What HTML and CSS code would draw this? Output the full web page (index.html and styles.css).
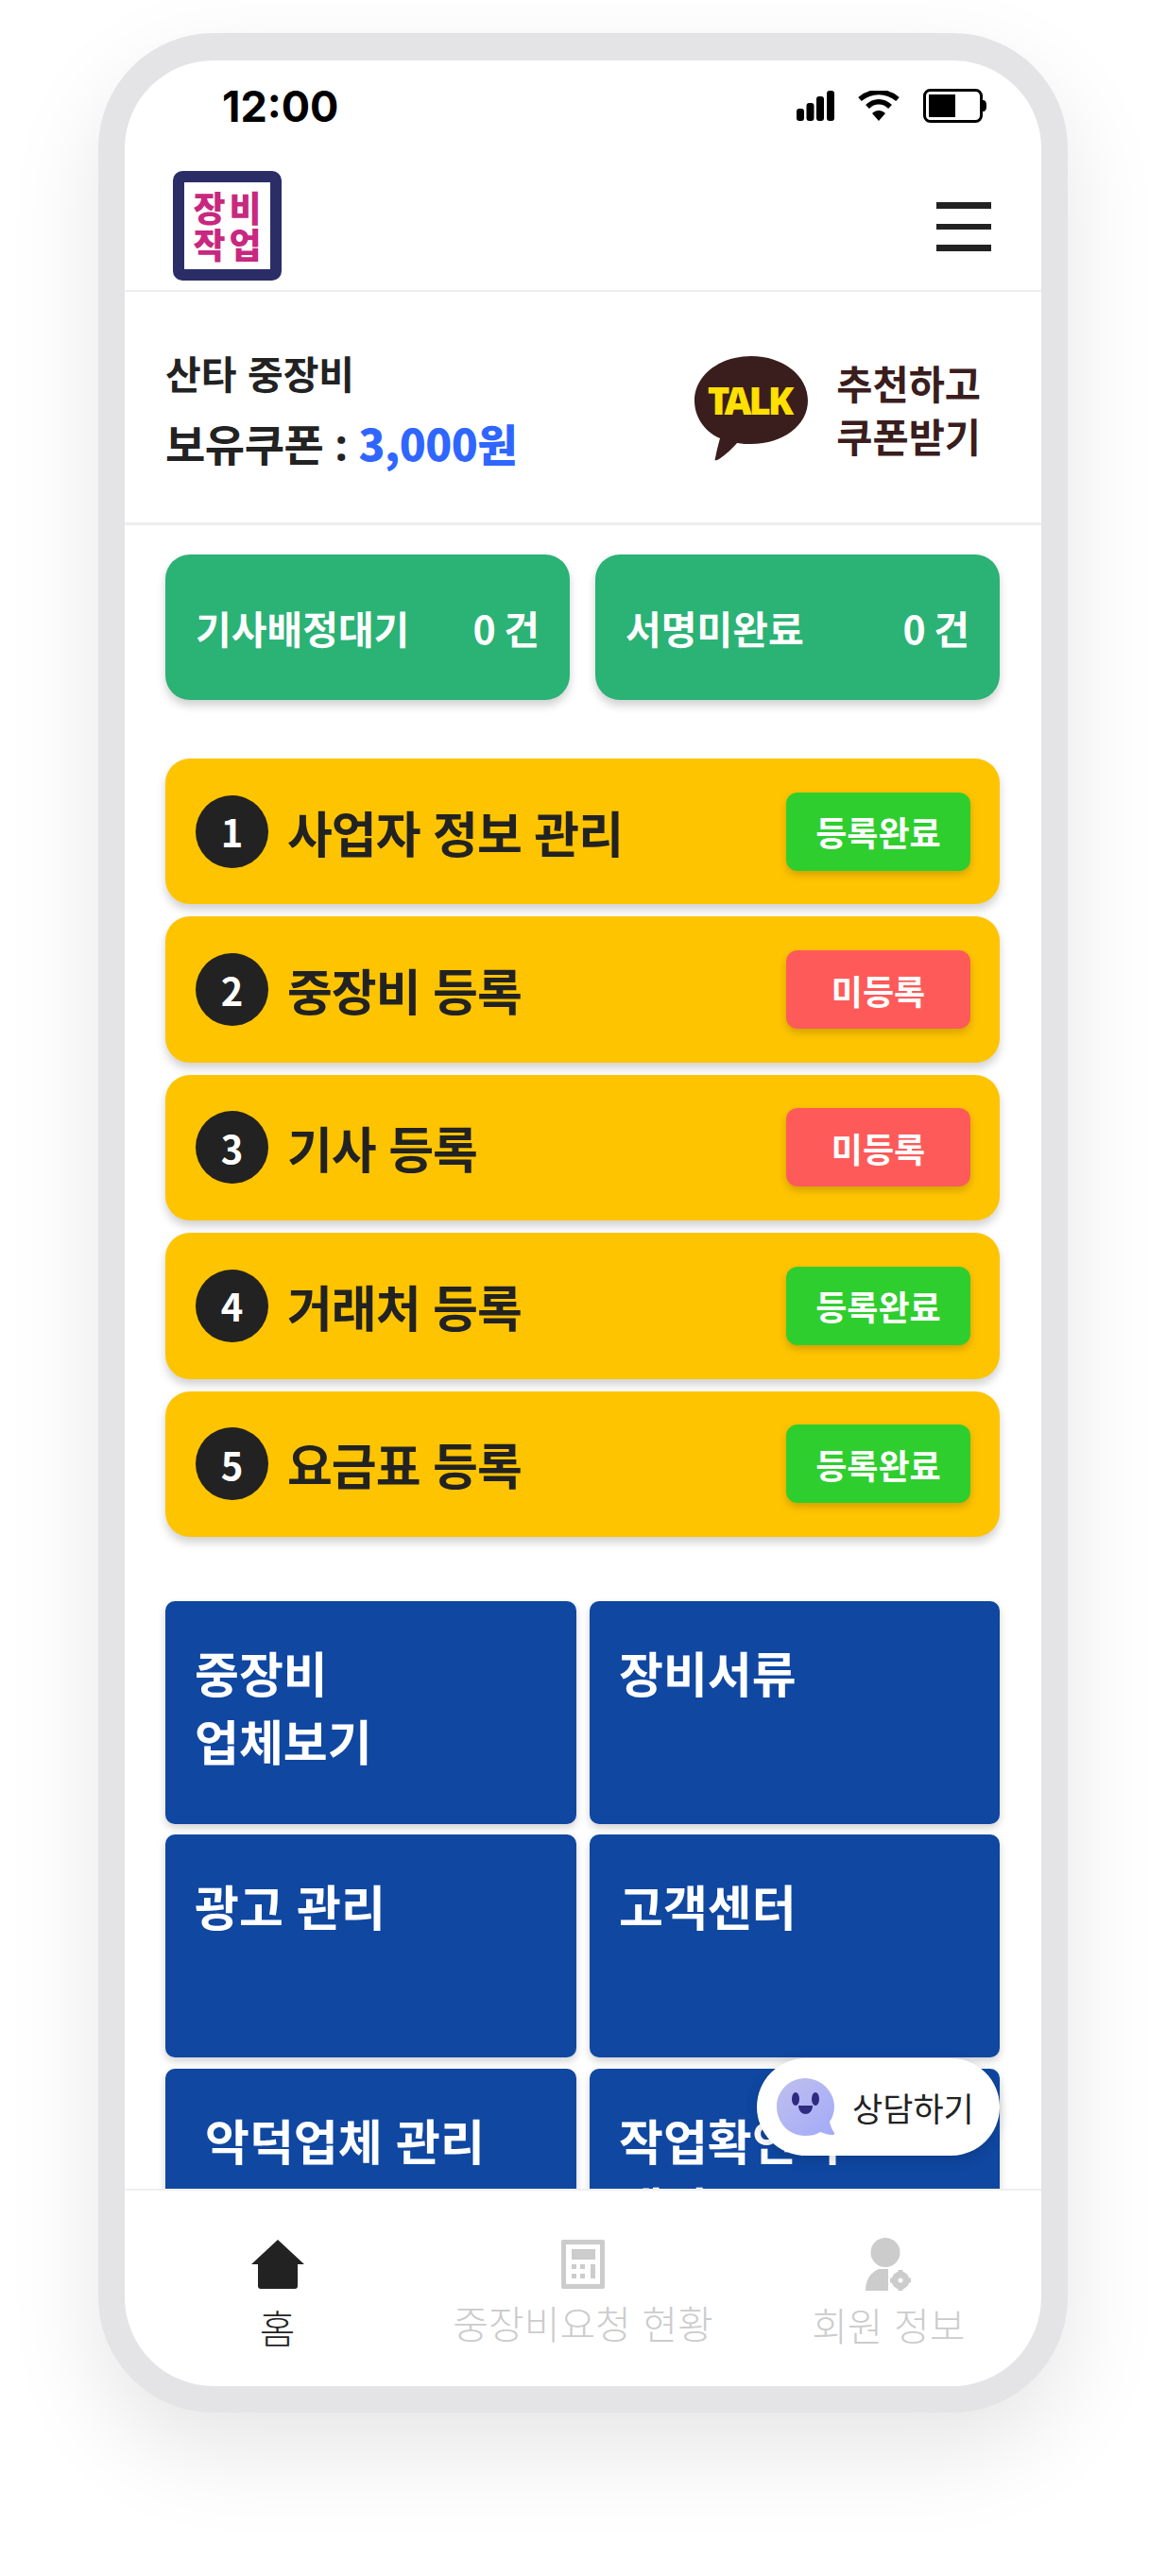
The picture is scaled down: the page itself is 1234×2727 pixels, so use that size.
FILE: index.html
```html
<!DOCTYPE html>
<html lang="ko">
  <head>
    <meta charset="UTF-8" />
    <meta name="viewport" content="width=device-width, initial-scale=1.0" />
    <title>장비작업</title>
    <link rel="stylesheet" href="styles.css">
  </head>
  <body>
    <div class="phone">
      <div class="status-bar">
        <span class="clock">12:00</span>
        <div class="status-icons">
          <svg class="icon-signal" width="40" height="32" viewBox="0 0 40 32">
            <rect x="0" y="19" width="8" height="13" rx="3" />
            <rect x="10.5" y="13" width="8" height="19" rx="3" />
            <rect x="21" y="6" width="8" height="26" rx="3" />
            <rect x="32" y="0" width="8" height="32" rx="3" />
          </svg>
          <svg class="icon-wifi" width="44" height="32" viewBox="0 0 44 32">
            <path d="M2 9 C14 -1 30 -1 42 9" fill="none" stroke="#000" stroke-width="5.5" />
            <path d="M10 17 C17 10 27 10 34 17" fill="none" stroke="#000" stroke-width="5.5" />
            <path d="M15 24 C19 20 25 20 29 24 L22 32 Z" />
          </svg>
          <svg class="icon-battery" width="67" height="36" viewBox="0 0 67 36">
            <rect x="1.5" y="1.5" width="60" height="33" rx="6" fill="none" stroke="#000" stroke-width="3" />
            <rect x="6" y="6" width="28" height="24" />
            <path d="M63 12 C66 12 67 14 67 18 C67 22 66 24 63 24 Z" />
          </svg>
        </div>
      </div>

      <header class="top-bar">
        <div class="logo">장비<br />작업</div>
        <div class="menu-btn"><i></i><i></i><i></i></div>
      </header>

      <main class="content">
        <section class="info">
          <div class="info-left">
            <p class="company">산타 중장비</p>
            <p class="coupon">보유쿠폰 <span class="colon">:</span> <b>3,000원</b></p>
          </div>
          <div class="invite">
            <svg class="talk-icon" width="122" height="112" viewBox="0 0 122 112">
              <path d="M61 0 C95 0 121 21 121 47 C121 73 95 93 61 93 C56 93 52 93 46 92 C40 99 31 107 25 110 C23 111 22 110 23 108 C24 102 26 94 28 87 C10 79 1 63 1 47 C1 21 27 0 61 0 Z" fill="#3a1d1d" />
              <text x="59" y="62" text-anchor="middle" class="talk-text">TALK</text>
            </svg>
            <p class="invite-text">추천하고<br />쿠폰받기</p>
          </div>
        </section>

        <section class="status-cards">
          <div class="status-card"><span>기사배정대기</span><span class="count">0 건</span></div>
          <div class="status-card"><span>서명미완료</span><span class="count">0 건</span></div>
        </section>

        <section class="steps">
          <div class="step">
            <span class="step-num">1</span>
            <span class="step-name">사업자 정보 관리</span>
            <span class="badge done">등록완료</span>
          </div>
          <div class="step">
            <span class="step-num">2</span>
            <span class="step-name">중장비 등록</span>
            <span class="badge todo">미등록</span>
          </div>
          <div class="step">
            <span class="step-num">3</span>
            <span class="step-name">기사 등록</span>
            <span class="badge todo">미등록</span>
          </div>
          <div class="step">
            <span class="step-num">4</span>
            <span class="step-name">거래처 등록</span>
            <span class="badge done">등록완료</span>
          </div>
          <div class="step">
            <span class="step-num">5</span>
            <span class="step-name">요금표 등록</span>
            <span class="badge done">등록완료</span>
          </div>
        </section>

        <section class="tiles">
          <div class="tile">중장비<br />업체보기</div>
          <div class="tile">장비서류</div>
          <div class="tile">광고 관리</div>
          <div class="tile">고객센터</div>
          <div class="tile tile-indent">악덕업체 관리</div>
          <div class="tile">작업확인서<br />내역</div>
        </section>
      </main>

      <div class="chat-btn">
        <svg width="62" height="64" viewBox="0 0 62 64">
          <defs>
            <linearGradient id="chatFill" x1="0" y1="0" x2="1" y2="1">
              <stop offset="0" stop-color="#bfc0ee" />
              <stop offset="1" stop-color="#a3aaf8" />
            </linearGradient>
          </defs>
          <path d="M30 1 C47 1 61 15 61 31 C61 37 59 43 56 47 C57 52 59 56 60.5 58 C62 60 61 61 59 61 C54 61 50 59 46 58 C41 61 36 62 30 62 C13 62 0 48 0 31 C0 15 13 1 30 1 Z" fill="url(#chatFill)" />
          <ellipse cx="20" cy="23" rx="4" ry="7" fill="#2f2b80" />
          <ellipse cx="41" cy="23" rx="4" ry="7" fill="#2f2b80" />
          <path d="M23 30 L38 30 C38 36 34 39 30.5 39 C27 39 23 36 23 30 Z" fill="#2f2b80" />
        </svg>
        <span>상담하기</span>
      </div>

      <nav class="tab-bar">
        <div class="tab active">
          <svg width="56" height="52" viewBox="0 0 56 52">
            <path d="M28 0 L56 26 L49 26 L49 49 C49 51 48 52 46 52 L10 52 C8 52 7 51 7 49 L7 26 L0 26 Z" />
          </svg>
          <span>홈</span>
        </div>
        <div class="tab">
          <svg width="46" height="52" viewBox="0 0 46 52">
            <path fill-rule="evenodd" d="M2 0 H44 A2 2 0 0 1 46 2 V50 A2 2 0 0 1 44 52 H2 A2 2 0 0 1 0 50 V2 A2 2 0 0 1 2 0 Z M5 5 V47 H41 V5 Z" />
            <rect x="11" y="10" width="25" height="11" />
            <rect x="11" y="26" width="5" height="5" />
            <rect x="20" y="26" width="5" height="5" />
            <rect x="11" y="36" width="5" height="5" />
            <rect x="20" y="36" width="5" height="5" />
            <rect x="31" y="26" width="5" height="15" />
          </svg>
          <span>중장비요청 현황</span>
        </div>
        <div class="tab tab-member">
          <svg width="48" height="56" viewBox="0 0 48 56">
            <ellipse cx="21" cy="15.500" rx="15.500" ry="15.500" />
            <path d="M0 56 C0 46 4 37 14 33 L24 33 L24 56 Z" />
            <circle cx="37" cy="45" r="6" fill="none" stroke="#ccc" stroke-width="7" />
            <path d="M34.500 34 H39.500 V38 H34.500 Z M34.500 52 H39.500 V56 H34.500 Z M26 42.500 H30 V47.500 H26 Z M44 42.500 H48 V47.500 H44 Z" />
          </svg>
          <span>회원 정보</span>
        </div>
      </nav>
    </div>
  </body>
</html>
```

FILE: styles.css
```css
* {
  box-sizing: border-box;
}
body {
  margin: 0;
  height: 2727px;
  padding: 35px 104px 0;
  background: #fff;
  font-family: "Noto Sans CJK KR", "Noto Sans", sans-serif;
  color: #222;
  overflow: hidden;
}
p {
  margin: 0;
}

.phone {
  position: relative;
  width: 1026px;
  height: 2519px;
  border: solid #e4e4e6;
  border-width: 29px 28px 28px;
  border-radius: 122px;
  background: #fff;
  box-shadow: 0 40px 100px rgba(0, 0, 0, 0.1);
  display: flex;
  flex-direction: column;
  overflow: hidden;
}

/* status bar */
.status-bar {
  height: 90px;
  padding: 6px 58px 0 103px;
  display: flex;
  align-items: center;
  justify-content: space-between;
  flex-shrink: 0;
}
.clock {
  font-family: Inter, "Liberation Sans", sans-serif;
  font-weight: 700;
  font-size: 45px;
  color: #000;
}
.status-icons {
  display: flex;
  align-items: center;
  gap: 25px;
}
.status-icons svg {
  display: block;
}

/* top bar */
.top-bar {
  height: 155px;
  padding: 27px 53px 0 51px;
  border-bottom: 2px solid #eee;
  display: flex;
  justify-content: space-between;
  flex-shrink: 0;
}
.logo {
  width: 115px;
  height: 116px;
  padding-left: 4px;
  border: 12px solid #2b2d66;
  border-radius: 10px;
  background: #fff;
  color: #c8287f;
  font-weight: 900;
  font-size: 37px;
  line-height: 39px;
  letter-spacing: 4px;
  text-align: center;
  white-space: nowrap;
  display: flex;
  align-items: center;
  justify-content: center;
}
.menu-btn {
  width: 58px;
  margin-top: 33px;
  display: flex;
  flex-direction: column;
  gap: 16px;
}
.menu-btn i {
  display: block;
  height: 6.500px;
  background: #222;
}

/* scrolling area */
.content {
  flex: 1;
  min-height: 0;
  overflow: hidden;
  border-bottom: 2px solid #eee;
}

.info {
  height: 247px;
  padding: 0 64px 0 43px;
  border-bottom: 3px solid #eee;
  display: flex;
  justify-content: space-between;
}
.info-left {
  padding-top: 57px;
}
.company {
  font-size: 41px;
  font-weight: 700;
  line-height: 56px;
}
.coupon {
  font-size: 46px;
  font-weight: 700;
  line-height: 66px;
  letter-spacing: -0.5px;
  margin-top: 13px;
}
.colon {
  font-family: "Noto Sans", sans-serif;
}
.coupon b {
  color: #2f66ff;
}
.invite {
  padding-top: 68px;
  display: flex;
  align-items: flex-start;
  gap: 29px;
}
.talk-text {
  font-family: "Noto Sans", sans-serif;
  font-weight: 900;
  font-size: 40px;
  letter-spacing: -3px;
  fill: #ffe000;
}
.invite-text {
  font-size: 41.500px;
  font-weight: 700;
  line-height: 56px;
  color: #3a1d1d;
}

.status-cards {
  padding: 31px 44px 0 43px;
  display: grid;
  grid-template-columns: 428px 428px;
  justify-content: space-between;
}
.status-card {
  height: 154px;
  padding: 0 32px;
  border-radius: 26px;
  background: #2bb275;
  box-shadow: 0 6px 10px rgba(0, 0, 0, 0.18);
  color: #fff;
  font-size: 41px;
  font-weight: 700;
  display: flex;
  align-items: center;
  justify-content: space-between;
}
.count {
  word-spacing: -3px;
}

.steps {
  padding: 62px 44px 0 43px;
  display: flex;
  flex-direction: column;
  gap: 13px;
}
.step {
  height: 154.400px;
  padding: 0 31px 0 32px;
  border-radius: 26px;
  background: #ffc400;
  box-shadow: 0 6px 10px rgba(0, 0, 0, 0.18);
  display: flex;
  align-items: center;
}
.step-num {
  width: 77px;
  height: 77px;
  border-radius: 50%;
  background: #222;
  color: #fff;
  font-size: 40px;
  font-weight: 700;
  display: flex;
  align-items: center;
  justify-content: center;
}
.step-name {
  margin-left: 20px;
  font-size: 52px;
  font-weight: 700;
  letter-spacing: -1px;
}
.badge {
  margin-left: auto;
  width: 195px;
  height: 83px;
  border-radius: 12px;
  box-shadow: 0 4px 8px rgba(0, 0, 0, 0.18);
  color: #fff;
  font-size: 36px;
  font-weight: 700;
  display: flex;
  align-items: center;
  justify-content: center;
}
.badge.done {
  background: #2fce2f;
}
.badge.todo {
  background: #ff5a5a;
}

.tiles {
  padding: 68px 44px 0 43px;
  display: grid;
  grid-template-columns: 435px 434px;
  justify-content: space-between;
  grid-auto-rows: 236px;
  row-gap: 11.500px;
}
.tile {
  padding: 39px 31px 0;
  border-radius: 10px;
  background: #0f47a1;
  box-shadow: 0 4px 8px rgba(0, 0, 0, 0.18);
  color: #fff;
  font-size: 51px;
  font-weight: 700;
  line-height: 72px;
}
.tile-indent {
  padding-left: 42px;
}

/* chat button */
.chat-btn {
  position: absolute;
  left: 669px;
  top: 2115px;
  width: 257px;
  height: 103px;
  padding-left: 21px;
  border-radius: 52px;
  background: #fff;
  box-shadow: 0 4px 14px rgba(0, 0, 0, 0.15);
  font-size: 35px;
  display: flex;
  align-items: center;
  gap: 18px;
}

/* tab bar */
.tab-bar {
  height: 207px;
  padding-top: 52px;
  display: grid;
  grid-template-columns: 1fr 1fr 1fr;
  flex-shrink: 0;
}
.tab {
  color: #ccc;
  fill: #ccc;
  font-size: 41px;
  font-weight: 300;
  line-height: 56px;
  text-align: center;
  display: flex;
  flex-direction: column;
  align-items: center;
  gap: 7px;
}
.tab svg {
  display: block;
}
.tab-member svg {
  margin-top: -2px;
}
.tab.active {
  color: #222;
  fill: #222;
  gap: 12px;
}
```
